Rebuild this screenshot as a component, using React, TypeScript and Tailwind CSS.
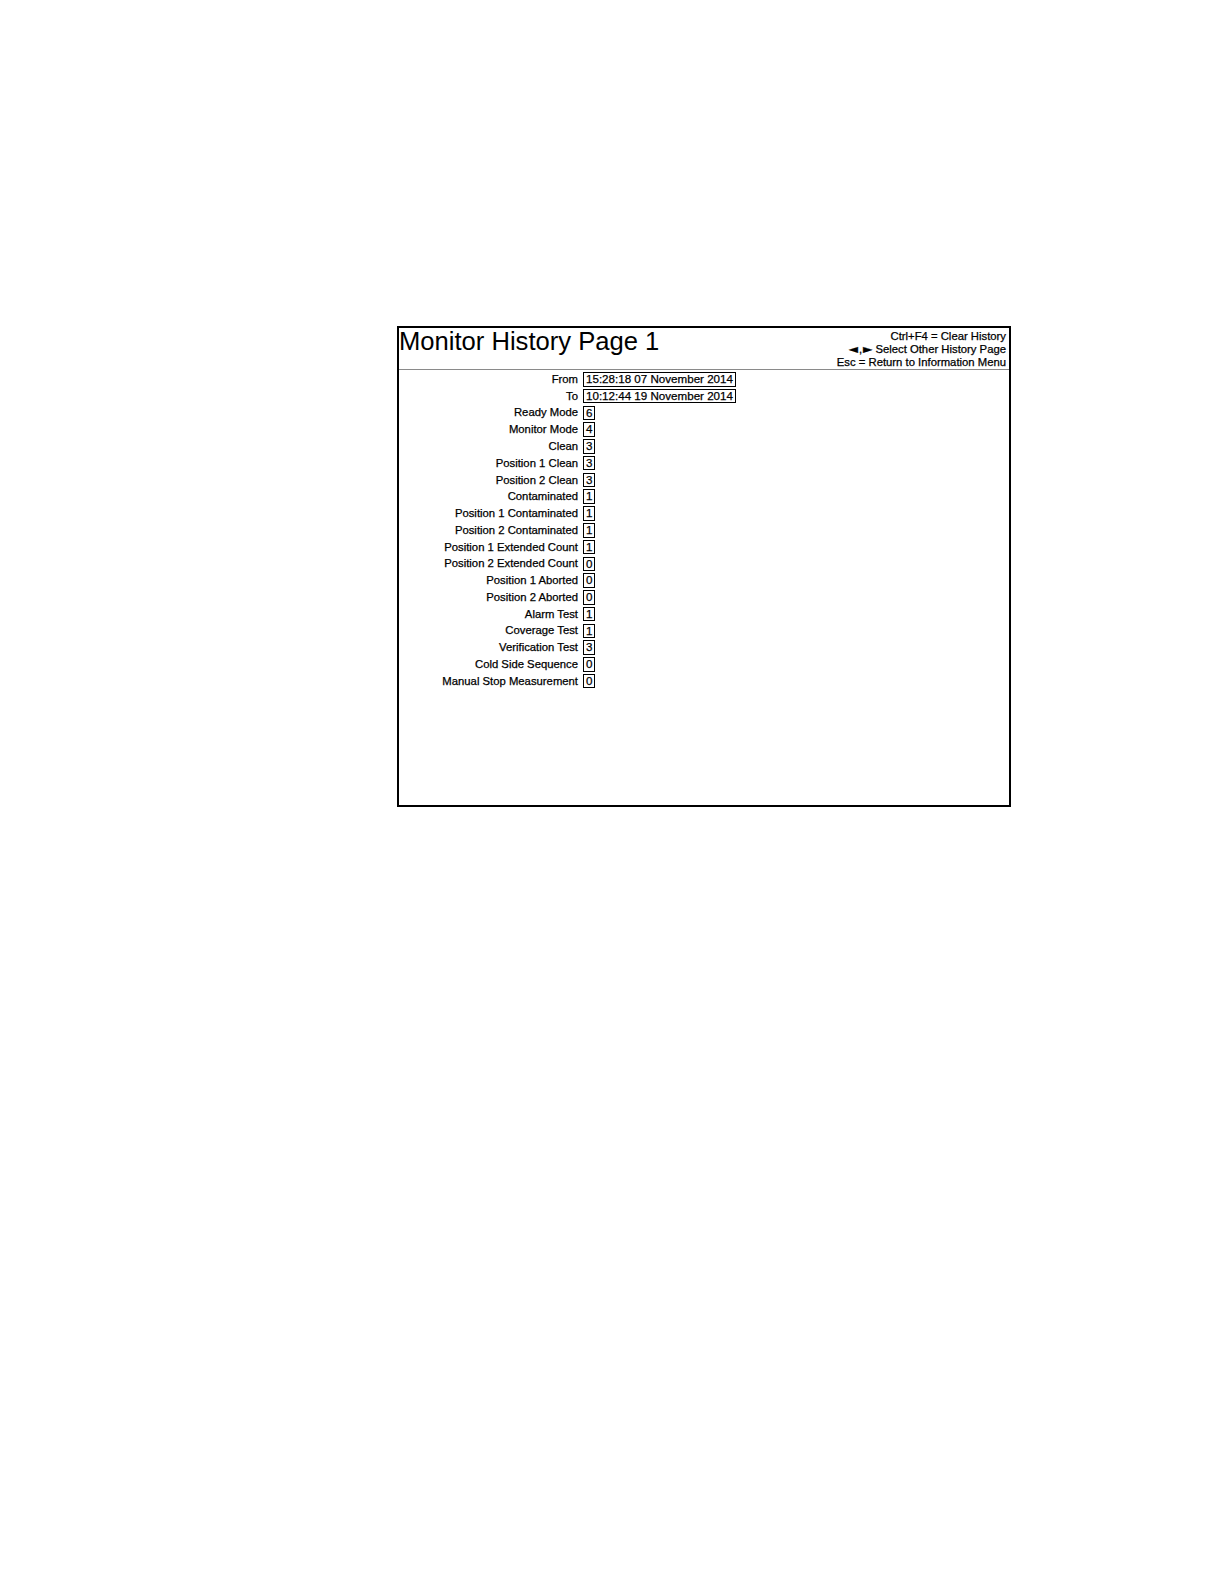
import React from "react";

const rows: [string, string][] = [
  ["From", "15:28:18 07 November 2014"],
  ["To", "10:12:44 19 November 2014"],
  ["Ready Mode", "6"],
  ["Monitor Mode", "4"],
  ["Clean", "3"],
  ["Position 1 Clean", "3"],
  ["Position 2 Clean", "3"],
  ["Contaminated", "1"],
  ["Position 1 Contaminated", "1"],
  ["Position 2 Contaminated", "1"],
  ["Position 1 Extended Count", "1"],
  ["Position 2 Extended Count", "0"],
  ["Position 1 Aborted", "0"],
  ["Position 2 Aborted", "0"],
  ["Alarm Test", "1"],
  ["Coverage Test", "1"],
  ["Verification Test", "3"],
  ["Cold Side Sequence", "0"],
  ["Manual Stop Measurement", "0"],
];

export default function App() {
  return (
    <div
      className="min-h-[1584px] w-[1224px] bg-white text-black pt-[326px] pl-[397px]"
      style={{ fontFamily: '"Liberation Sans", Arial, sans-serif' }}
    >
      <div className="w-[614px] h-[481px] border-2 border-black flex flex-col">
        <div className="h-[42px] shrink-0 flex justify-between border-b border-[#8a8a8a]">
          <div className="text-[25.6px] leading-none pl-0 pt-[1px]">Monitor History Page 1</div>
          <div className="text-[11.3px] leading-[13.2px] text-right pr-[3px] pt-[2px] [-webkit-text-stroke:0.25px_black]">
            <div>Ctrl+F4 = Clear History</div>
            <div>
              <span style={{ fontFamily: '"DejaVu Sans", sans-serif' }} className="text-[12px] leading-none">◄</span>
              <span className="mx-[1px]">,</span>
              <span style={{ fontFamily: '"DejaVu Sans", sans-serif' }} className="text-[12px] leading-none">►</span> Select Other History Page
            </div>
            <div>Esc = Return to Information Menu</div>
          </div>
        </div>
        <div className="pt-[1px] flex flex-col">
          {rows.map(([label, value]) => (
            <div key={label} className="flex items-center h-[16.77px] text-[11.3px] [-webkit-text-stroke:0.25px_black]">
              <div className="w-[184px] text-right pr-[5px] whitespace-nowrap">{label}</div>
              <div className="border border-black h-[14.5px] leading-[12.5px] text-[11.6px] pl-[2px] pr-[2px] whitespace-nowrap">
                {value}
              </div>
            </div>
          ))}
        </div>
      </div>
    </div>
  );
}
